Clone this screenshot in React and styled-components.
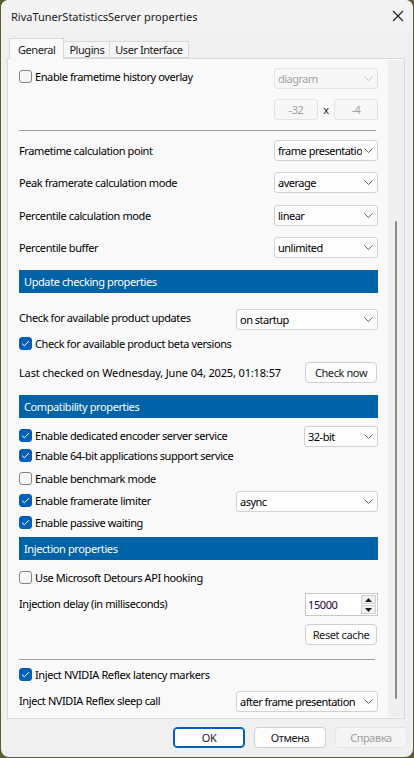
import React from 'react';
import styled, { createGlobalStyle } from 'styled-components';

const GlobalStyle = createGlobalStyle`
  html, body {
    margin: 0;
    padding: 0;
    background: #5f5c34;
  }
  * { box-sizing: border-box; }
`;

const Window = styled.div`
  width: 412px;
  height: 757px;
  margin-left: 1px;
  border-radius: 8px;
  background: #f0f0f0;
  overflow: hidden;
  display: flex;
  flex-direction: column;
  font-family: "Noto Sans", "Open Sans", sans-serif;
  font-size: 11px;
  letter-spacing: -0.4px;
  color: #000;
`;

const TitleBar = styled.div`
  height: 32px;
  flex: none;
  background: #f3f3f3;
  display: flex;
  align-items: center;
  justify-content: space-between;
  padding: 0 9px 0 10px;
  font-size: 11px;
  letter-spacing: 0;
  color: #1a1a1a;
`;

const Body = styled.div`
  flex: 1;
  display: flex;
  flex-direction: column;
  padding: 6px 6px 0 6px;
`;

const TabStrip = styled.div`
  display: flex;
  align-items: flex-end;
  height: 20px;
  padding-left: 2px;
  position: relative;
  z-index: 1;
`;

const Tab = styled.div`
  height: ${p => (p.$active ? '21px' : '17px')};
  padding: 0 ${p => (p.$active ? '8px' : '5px')};
  margin-bottom: ${p => (p.$active ? '-1px' : '0')};
  display: flex;
  align-items: center;
  background: ${p => (p.$active ? '#f9f9f9' : '#f5f5f5')};
  border: 1px solid #d9d9d9;
  border-bottom: ${p => (p.$active ? 'none' : '1px solid #d9d9d9')};
  border-left: ${p => (p.$first || p.$active ? '1px solid #d9d9d9' : 'none')};
  color: #1a1a1a;
  letter-spacing: -0.45px;
`;

const Panel = styled.div`
  height: 661px;
  width: 398px;
  border: 1px solid #d9d9d9;
  background: #f9f9f9;
  display: flex;
`;

const Content = styled.div`
  flex: 1;
  min-width: 0;
  padding: 9px 9px 0 11px;
  display: flex;
  flex-direction: column;
`;

const ScrollTrack = styled.div`
  width: 17px;
  flex: none;
  margin: 1px 0 1px 0;
  background: #efefef;
  border-left: 1px solid #f6f6f6;
  display: flex;
  justify-content: center;
  padding-top: 161px;
`;

const Thumb = styled.div`
  width: 2px;
  height: 478px;
  border-radius: 1px;
  background: #8a8a8a;
`;

const Row = styled.div`
  display: flex;
  justify-content: space-between;
  align-items: ${p => p.$align || 'center'};
  height: ${p => p.$h}px;
  margin-top: ${p => p.$mt}px;
  flex: none;
`;

const Label = styled.span`
  white-space: nowrap;
  padding-top: ${p => p.$pt || 0}px;
  letter-spacing: ${p => (p.$ls !== undefined ? `${p.$ls}px` : 'inherit')};
`;

const CheckWrap = styled.label`
  display: flex;
  align-items: center;
  gap: 3px;
  white-space: nowrap;
  margin-top: ${p => p.$pt || 0}px;
`;

const Box = styled.span`
  width: 13px;
  height: 13px;
  border-radius: 3px;
  flex: none;
  display: flex;
  align-items: center;
  justify-content: center;
  background: ${p => (p.$checked ? '#005fb8' : '#f6f6f6')};
  border: 1px solid ${p => (p.$checked ? '#005fb8' : '#858585')};
`;

const Separator = styled.div`
  height: 1px;
  background: #a0a0a0;
  margin-top: ${p => p.$mt}px;
  margin-right: ${p => p.$mr || 0}px;
  flex: none;
`;

const Header = styled.div`
  height: 23px;
  margin-top: ${p => p.$mt}px;
  flex: none;
  background: #0063a8;
  color: #fff;
  display: flex;
  align-items: center;
  padding-left: 5px;
`;

const SelectBox = styled.div`
  width: ${p => p.$w}px;
  height: ${p => p.$h || 21}px;
  flex: none;
  border: 1px solid ${p => (p.$disabled ? '#e3e3e3' : '#d2d2d2')};
  border-radius: 3px;
  background: ${p => (p.$disabled ? '#f7f7f7' : '#fdfdfd')};
  color: ${p => (p.$disabled ? '#a3a3a3' : '#000')};
  display: flex;
  align-items: center;
  justify-content: space-between;
  padding: 0 4px 0 3px;
  overflow: hidden;
  white-space: nowrap;
  letter-spacing: -0.5px;
`;

const SelectText = styled.span`
  overflow: hidden;
  flex: 1;
  min-width: 0;
`;

const SizeBox = styled.div`
  width: 44px;
  height: 21px;
  border: 1px solid #e3e3e3;
  border-radius: 3px;
  background: #f7f7f7;
  color: #a3a3a3;
  display: flex;
  align-items: center;
  justify-content: center;
`;

const SizeGroup = styled.div`
  display: flex;
  align-items: center;
  margin-left: auto;
`;

const Times = styled.span`
  width: 16px;
  text-align: center;
  color: #222;
`;

const Button = styled.div`
  width: ${p => p.$w || 72}px;
  height: 21px;
  flex: none;
  border: 1px solid ${p => (p.$default ? '#005fb8' : p.$disabled ? '#e5e5e5' : '#d0d0d0')};
  border-radius: 4px;
  background: ${p => (p.$disabled ? '#f5f5f5' : '#fdfdfd')};
  color: ${p => (p.$disabled ? '#a0a0a0' : '#1a1a1a')};
  display: flex;
  align-items: center;
  justify-content: center;
  margin-right: ${p => p.$mr || 0}px;
  box-shadow: ${p => (p.$default ? 'inset 0 0 0 1px #005fb8' : 'none')};
`;

const Spin = styled.div`
  width: 73px;
  height: 23px;
  flex: none;
  display: flex;
  border: 1px solid #c8c8c8;
  background: #fff;
`;

const SpinInput = styled.div`
  flex: 1;
  display: flex;
  align-items: center;
  padding-left: 2px;
  color: #1b0040;
`;

const SpinButtons = styled.div`
  width: 17px;
  display: flex;
  flex-direction: column;
  gap: 1px;
  padding: 1px;
  background: #fff;
`;

const SpinBtn = styled.div`
  flex: 1;
  background: #f0f0f0;
  border: 1px solid #cfcfcf;
  display: flex;
  align-items: center;
  justify-content: center;
`;

const Footer = styled.div`
  display: flex;
  justify-content: flex-end;
  gap: 9px;
  padding: 8px 0 0 0;
`;

const Chevron = ({ disabled }) => (
  <svg width="9" height="5" viewBox="0 0 9 5" style={{ flex: 'none', marginLeft: 2 }}>
    <path d="M0.5 0.5 L4.5 4.5 L8.5 0.5" fill="none" stroke={disabled ? '#c4c4c4' : '#606060'} strokeWidth="1" />
  </svg>
);

const Select = ({ w, value, disabled }) => (
  <SelectBox $w={w} $disabled={disabled}>
    <SelectText>{value}</SelectText>
    <Chevron disabled={disabled} />
  </SelectBox>
);

const Check = ({ checked, children, pt }) => (
  <CheckWrap $pt={pt}>
    <Box $checked={checked}>
      {checked && (
        <svg width="9" height="7" viewBox="0 0 9 7">
          <path d="M1 3.6 L3.3 5.8 L8 1.2" fill="none" stroke="#fff" strokeWidth="1" />
        </svg>
      )}
    </Box>
    {children}
  </CheckWrap>
);

const Arrow = ({ up }) => (
  <svg width="7" height="4" viewBox="0 0 7 4">
    <path d={up ? 'M0 4 L3.5 0 L7 4 Z' : 'M0 0 L3.5 4 L7 0 Z'} fill="#1a1a1a" />
  </svg>
);

const App = () => (
  <>
    <GlobalStyle />
    <Window>
      <TitleBar>
        <span>RivaTunerStatisticsServer properties</span>
        <svg width="12" height="12" viewBox="0 0 12 12">
          <path d="M1 1 L11 11 M11 1 L1 11" stroke="#1a1a1a" strokeWidth="1.1" />
        </svg>
      </TitleBar>
      <Body>
        <TabStrip>
          <Tab $active $first>General</Tab>
          <Tab>Plugins</Tab>
          <Tab>User Interface</Tab>
        </TabStrip>
        <Panel>
          <Content>
            <Row $h={21} $mt={0} $align="flex-start">
              <Check pt={1}>Enable frametime history overlay</Check>
              <Select w={104} value="diagram" disabled />
            </Row>
            <Row $h={21} $mt={10}>
              <SizeGroup>
                <SizeBox>-32</SizeBox>
                <Times>x</Times>
                <SizeBox>-4</SizeBox>
              </SizeGroup>
            </Row>
            <Separator $mt={10} $mr={2} />

            <Row $h={21} $mt={9}>
              <Label>Frametime calculation point</Label>
              <Select w={104} value="frame presentation" />
            </Row>
            <Row $h={21} $mt={11}>
              <Label>Peak framerate calculation mode</Label>
              <Select w={104} value="average" />
            </Row>
            <Row $h={21} $mt={12}>
              <Label>Percentile calculation mode</Label>
              <Select w={104} value="linear" />
            </Row>
            <Row $h={21} $mt={11}>
              <Label>Percentile buffer</Label>
              <Select w={104} value="unlimited" />
            </Row>

            <Header $mt={12}>Update checking properties</Header>
            <Row $h={21} $mt={16} $align="flex-start">
              <Label $pt={1}>Check for available product updates</Label>
              <Select w={142} value="on startup" />
            </Row>
            <Row $h={14} $mt={6}>
              <Check checked>Check for available product beta versions</Check>
            </Row>
            <Row $h={21} $mt={12}>
              <Label $ls={-0.15}>Last checked on Wednesday, June 04, 2025, 01:18:57</Label>
              <Button $mr={1}>Check now</Button>
            </Row>

            <Header $mt={12}>Compatibility properties</Header>
            <Row $h={21} $mt={8} $align="flex-start">
              <Check checked pt={2}>Enable dedicated encoder server service</Check>
              <Select w={74} value="32-bit" />
            </Row>
            <Row $h={14} $mt={1}>
              <Check checked>Enable 64-bit applications support service</Check>
            </Row>
            <Row $h={14} $mt={9}>
              <Check>Enable benchmark mode</Check>
            </Row>
            <Row $h={21} $mt={6} $align="flex-start">
              <Check checked pt={2}>Enable framerate limiter</Check>
              <Select w={142} value="async" />
            </Row>
            <Row $h={14} $mt={3}>
              <Check checked>Enable passive waiting</Check>
            </Row>

            <Header $mt={8}>Injection properties</Header>
            <Row $h={14} $mt={10}>
              <Check>Use Microsoft Detours API hooking</Check>
            </Row>
            <Row $h={23} $mt={9} $align="flex-start">
              <Label $pt={3}>Injection delay (in milliseconds)</Label>
              <Spin>
                <SpinInput>15000</SpinInput>
                <SpinButtons>
                  <SpinBtn><Arrow up /></SpinBtn>
                  <SpinBtn><Arrow /></SpinBtn>
                </SpinButtons>
              </Spin>
            </Row>
            <Row $h={21} $mt={8}>
              <span />
              <Button $mr={1}>Reset cache</Button>
            </Row>
            <Separator $mt={14} $mr={3} />
            <Row $h={14} $mt={7}>
              <Check checked>Inject NVIDIA Reflex latency markers</Check>
            </Row>
            <Row $h={21} $mt={10} $align="flex-start">
              <Label $pt={2}>Inject NVIDIA Reflex sleep call</Label>
              <Select w={142} value="after frame presentation" />
            </Row>
          </Content>
          <ScrollTrack>
            <Thumb />
          </ScrollTrack>
        </Panel>
        <Footer>
          <Button $default>OK</Button>
          <Button>Отмена</Button>
          <Button $disabled>Справка</Button>
        </Footer>
      </Body>
    </Window>
  </>
);

export default App;
